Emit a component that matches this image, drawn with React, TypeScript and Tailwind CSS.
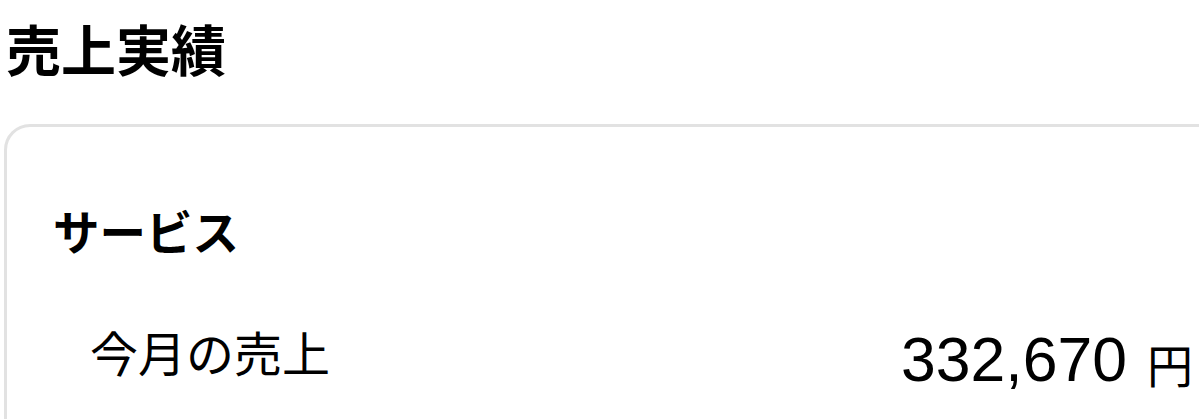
import React from "react";

export default function App() {
  const jp = { fontFamily: '"Noto Sans CJK JP", "Noto Sans", sans-serif' };
  return (
    <div className="w-[1199px] h-[419px] overflow-hidden bg-white text-black" style={jp}>
      <h1 className="pl-[6px] pt-[9px] text-[55px] leading-[76px] font-bold">売上実績</h1>
      <div className="mt-[39px] ml-[4px] mr-[-40px] border-[3px] border-[#e2e2e2] rounded-[26px] pl-[46px] pr-[43px] pt-[73px] pb-[80px]">
        <h2 className="text-[46.5px] leading-[60px] font-bold">サービス</h2>
        <div className="mt-[60px] flex items-baseline justify-between pl-[37px]">
          <span className="text-[48px] leading-[60px] font-normal">今月の売上</span>
          <span className="flex items-baseline translate-y-[9px]">
            <span className="text-[62.5px] leading-[60px]" style={{ fontFamily: '"Liberation Sans", Arial, sans-serif' }}>332,670</span>
            <span className="ml-[20px] text-[46px] leading-[60px] translate-y-[2px]">円</span>
          </span>
        </div>
      </div>
    </div>
  );
}
